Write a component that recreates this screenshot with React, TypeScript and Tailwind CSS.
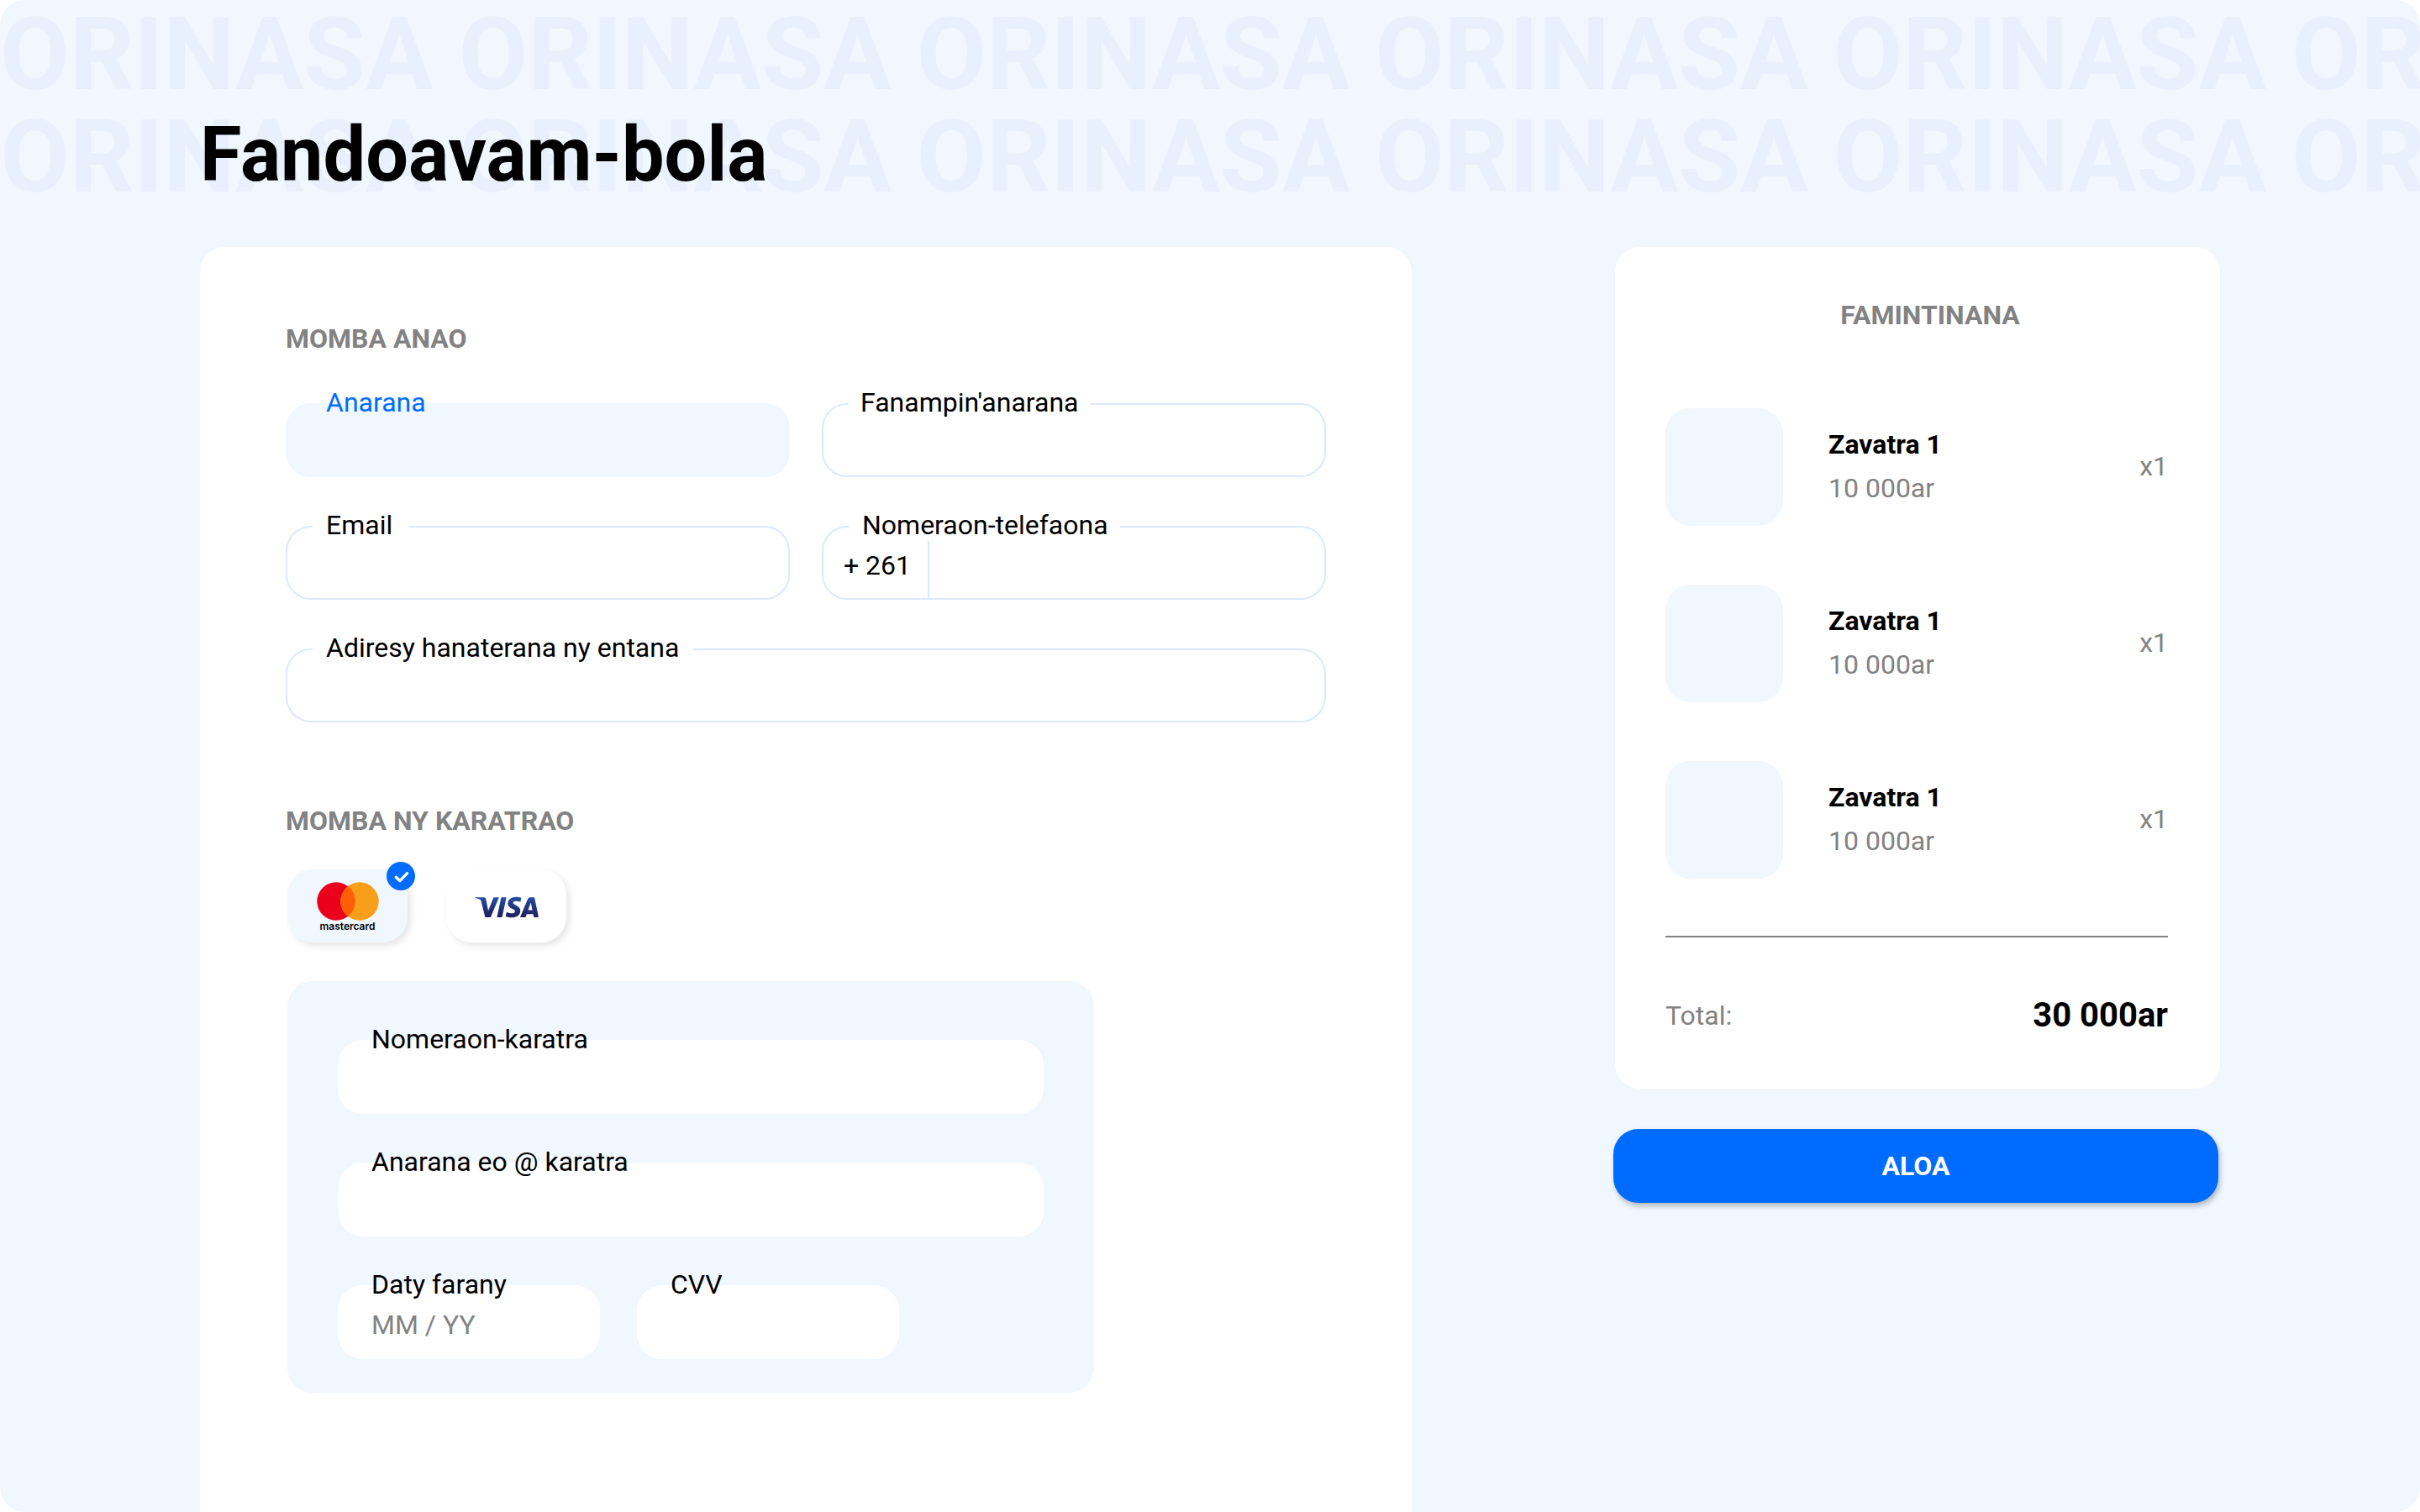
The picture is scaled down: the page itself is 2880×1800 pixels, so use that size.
import type { InputHTMLAttributes, ReactNode } from 'react';
import { SiVisa } from 'react-icons/si';

type FieldProps = {
  id: string;
  label: string;
  wrapperClass?: string;
  labelClass?: string;
  inputClass?: string;
  children?: ReactNode;
} & InputHTMLAttributes<HTMLInputElement>;

/* Text box whose label straddles its top edge. */
function Field({ id, label, wrapperClass = '', labelClass = '', inputClass = '', children, ...rest }: FieldProps) {
  return (
    <div className={`relative flex h-22 ${wrapperClass}`}>
      <input
        id={id}
        className={`h-full w-full min-w-0 rounded-[30px] pt-1.5 pr-6 outline-none placeholder:text-[#828282] placeholder:opacity-100 ${inputClass}`}
        {...rest}
      />
      <label htmlFor={id} className={`absolute -top-5 leading-[38px] ${labelClass}`}>
        {label}
      </label>
      {children}
    </div>
  );
}

const outlined = 'border-2 border-[#d9e9ff] bg-white pl-12';

function MastercardLogo() {
  return (
    <svg viewBox="0 0 74 46" className="h-[46px] w-[74px]" aria-hidden="true">
      <circle cx="23" cy="23" r="22.7" fill="#eb001b" />
      <circle cx="51" cy="23" r="22.7" fill="#f79e1b" />
      <path d="M37 5.1a22.7 22.7 0 0 1 0 35.8a22.7 22.7 0 0 1 0-35.8z" fill="#ff5f00" />
    </svg>
  );
}

function VisaLogo() {
  return (
    <>
      <svg className="absolute size-0" aria-hidden="true">
        <defs>
          <linearGradient id="visa-blue" x1="0" y1="0" x2="0" y2="1">
            <stop offset="0" stopColor="#2350a5" />
            <stop offset="1" stopColor="#211e5b" />
          </linearGradient>
        </defs>
      </svg>
      <SiVisa className="size-19" fill="url(#visa-blue)" aria-hidden="true" />
    </>
  );
}

function CardOption({ name, checked, children }: { name: string; checked?: boolean; children: ReactNode }) {
  return (
    <label className="relative flex h-[87px] w-[143px] cursor-pointer flex-col items-center justify-center rounded-[30px] bg-white pt-0.5 shadow-[4px_4px_8px_rgba(0,0,0,0.1)] has-checked:bg-[#f0f7ff]">
      <input type="radio" name="card" value={name} defaultChecked={checked} aria-label={name} className="peer sr-only" />
      {children}
      <span className="absolute -top-[9px] -right-[9px] hidden size-[34px] items-center justify-center rounded-full bg-[#006cff] peer-checked:flex">
        <svg viewBox="0 0 34 34" className="size-full" fill="none" stroke="#fff" strokeWidth="3.4" aria-hidden="true">
          <path d="M11.2 18.2l4.6 4.4l8.8-9" strokeLinecap="round" strokeLinejoin="round" />
        </svg>
      </span>
    </label>
  );
}

const items = [
  { id: 1, name: 'Zavatra 1', price: '10 000ar', count: 'x1' },
  { id: 2, name: 'Zavatra 1', price: '10 000ar', count: 'x1' },
  { id: 3, name: 'Zavatra 1', price: '10 000ar', count: 'x1' },
];

const watermark = 'ORINASA '.repeat(6);

export default function App() {
  return (
    <div className="bg-white">
      <div className="relative flex min-h-screen flex-col overflow-hidden rounded-[30px] bg-[#f0f7ff] px-[238px] font-['Roboto',sans-serif] text-[32px] leading-[42px] text-black">
        <div
          aria-hidden="true"
          className="pointer-events-none absolute inset-x-0 top-1 overflow-hidden text-[120px] leading-[122px] font-bold whitespace-nowrap text-[#e9f0fd] select-none"
        >
          <p>{watermark}</p>
          <p>{watermark}</p>
        </div>

        <header className="relative pt-33 pb-14">
          <h1 className="text-[90px] leading-[106px] font-bold">Fandoavam-bola</h1>
        </header>

        <form className="relative grid grow grid-cols-[minmax(0,1fr)_722px] gap-x-60" onSubmit={(e) => e.preventDefault()}>
          <main className="rounded-t-[30px] bg-white px-[102px] pt-22">
            <section>
              <h2 className="font-bold text-[#828282]">MOMBA ANAO</h2>
              <div className="mt-14 grid grid-cols-2 gap-x-[38px] gap-y-[58px]">
                <Field id="anarana" label="Anarana" labelClass="left-12 text-[#006cff]" inputClass="bg-[#f0f7ff] pl-12" />
                <Field
                  id="fanampiny"
                  label="Fanampin'anarana"
                  labelClass="left-8 bg-white px-3.5"
                  inputClass={outlined}
                />
                <Field id="email" type="email" label="Email" labelClass="left-8 bg-white pr-5 pl-4" inputClass={outlined} />
                <Field
                  id="telefaona"
                  type="tel"
                  label="Nomeraon-telefaona"
                  labelClass="left-8 bg-white pr-3.5 pl-4"
                  inputClass="border-2 border-[#d9e9ff] bg-white pl-36"
                >
                  <span className="absolute bottom-0.5 left-0.5 flex h-[68px] w-[126px] border-r-2 border-[#d9e9ff] pt-2 pl-6">
                    + 261
                  </span>
                </Field>
                <Field
                  id="adiresy"
                  label="Adiresy hanaterana ny entana"
                  wrapperClass="col-span-2"
                  labelClass="left-8 bg-white px-4"
                  inputClass={outlined}
                />
              </div>
            </section>

            <section className="mt-24">
              <h2 className="font-bold text-[#828282]">MOMBA NY KARATRAO</h2>
              <div className="mt-[37px] ml-0.5 flex gap-[46px]">
                <CardOption name="Mastercard" checked>
                  <MastercardLogo />
                  <span className="font-['Inter',sans-serif] text-[12px] leading-[14px] font-semibold">mastercard</span>
                </CardOption>
                <CardOption name="Visa">
                  <VisaLogo />
                </CardOption>
              </div>

              <div className="mt-[46px] ml-0.5 flex max-w-[960px] flex-col gap-[58px] rounded-[30px] bg-[#f0f7ff] px-15 pt-[70px] pb-10">
                <Field id="karatra" label="Nomeraon-karatra" labelClass="left-10" inputClass="bg-white pl-10" />
                <Field id="tompony" label="Anarana eo @ karatra" labelClass="left-10" inputClass="bg-white pl-10" />
                <div className="flex gap-11">
                  <Field
                    id="daty"
                    label="Daty farany"
                    placeholder="MM / YY"
                    wrapperClass="w-78"
                    labelClass="left-10"
                    inputClass="bg-white pl-10"
                  />
                  <Field id="cvv" label="CVV" wrapperClass="w-78" labelClass="left-10" inputClass="bg-white pl-10" />
                </div>
              </div>
            </section>
          </main>

          <aside className="flex flex-col gap-12 self-start">
            <section className="ml-0.5 rounded-[30px] bg-white pt-15 pr-[62px] pb-[62px] pl-15">
              <h2 className="pl-8 text-center font-bold text-[#828282]">FAMINTINANA</h2>
              <ul className="mt-[90px] flex flex-col gap-[70px]">
                {items.map((item) => (
                  <li key={item.id} className="flex items-center gap-[54px]">
                    <span className="size-35 rounded-[30px] bg-[#f0f7ff]" />
                    <div className="flex grow items-center justify-between pb-0.5">
                      <div className="leading-[52px]">
                        <p className="font-bold">{item.name}</p>
                        <p className="text-[#828282]">{item.price}</p>
                      </div>
                      <span className="text-[#828282]">{item.count}</span>
                    </div>
                  </li>
                ))}
              </ul>
              <hr className="mt-17 border-t-2 border-[#828282]" />
              <p className="mt-17 flex items-center justify-between leading-[50px]">
                <span className="text-[#828282]">Total:</span>
                <strong className="text-[40px] font-bold">30 000ar</strong>
              </p>
            </section>
            <button
              type="submit"
              className="mr-0.5 h-22 cursor-pointer rounded-[30px] bg-[#006cff] font-bold text-white shadow-[2px_4px_6px_rgba(0,0,0,0.25)]"
            >
              ALOA
            </button>
          </aside>
        </form>
      </div>
    </div>
  );
}
